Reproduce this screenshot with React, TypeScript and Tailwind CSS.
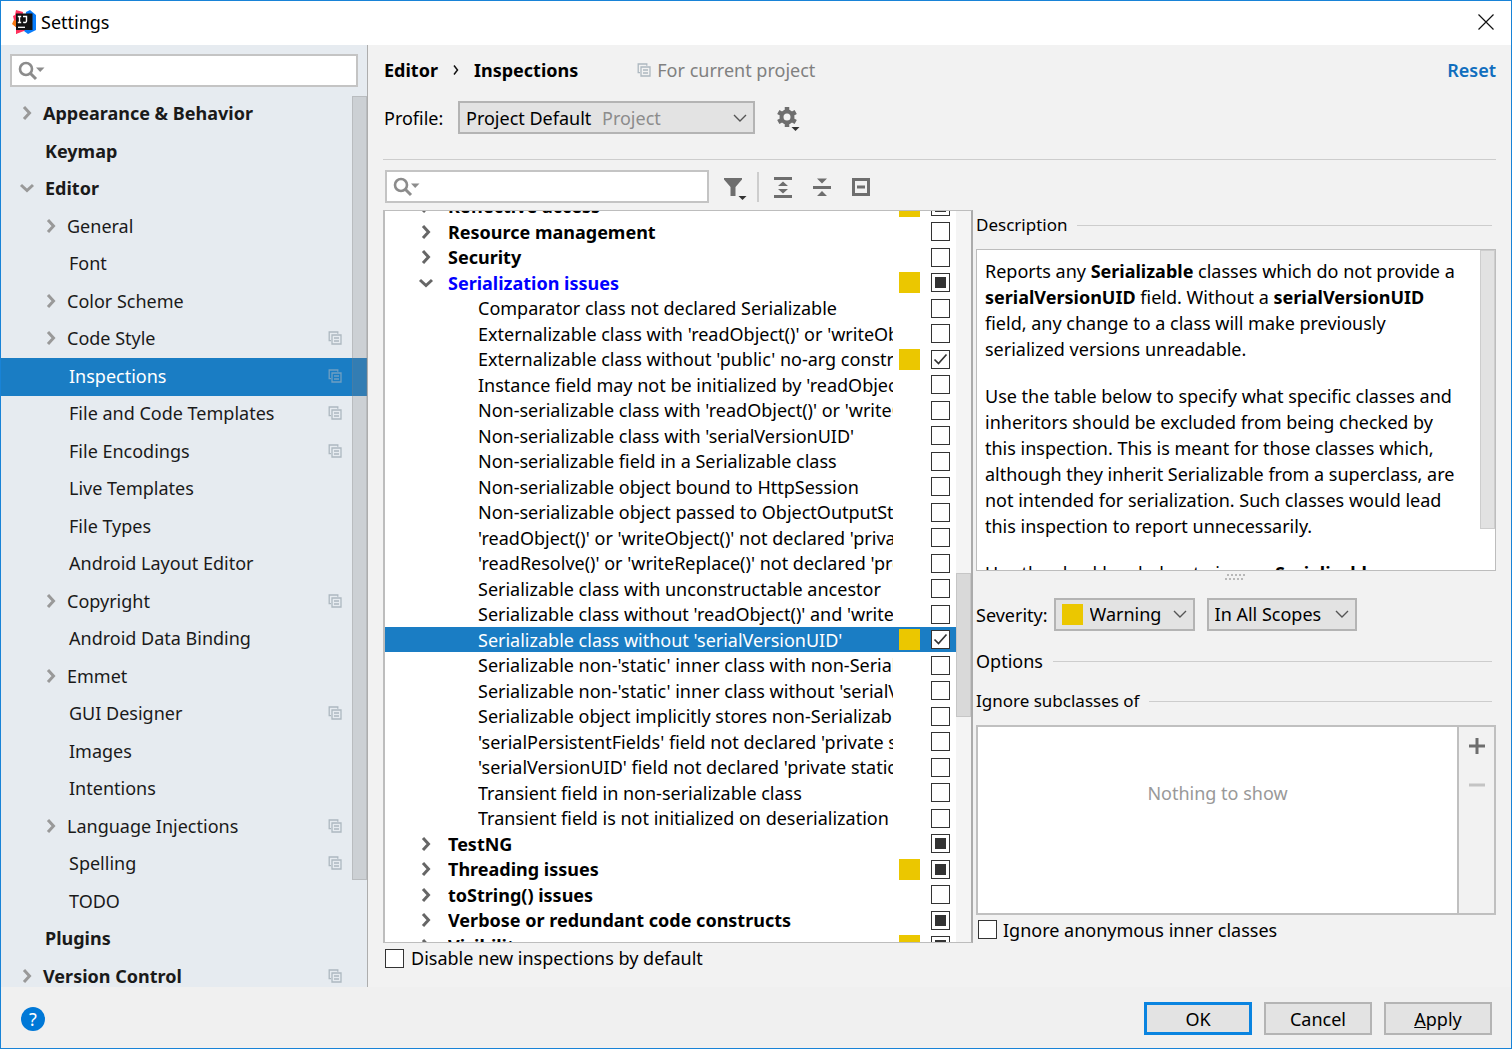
import type { ReactNode } from "react";

type TreeItem = { label: string; level: 0 | 1; arrow?: "open" | "closed"; shared?: boolean; selected?: boolean };

const tree: TreeItem[] = [
  { label: "Appearance & Behavior", level: 0, arrow: "closed" },
  { label: "Keymap", level: 0 },
  { label: "Editor", level: 0, arrow: "open" },
  { label: "General", level: 1, arrow: "closed" },
  { label: "Font", level: 1 },
  { label: "Color Scheme", level: 1, arrow: "closed" },
  { label: "Code Style", level: 1, arrow: "closed", shared: true },
  { label: "Inspections", level: 1, shared: true, selected: true },
  { label: "File and Code Templates", level: 1, shared: true },
  { label: "File Encodings", level: 1, shared: true },
  { label: "Live Templates", level: 1 },
  { label: "File Types", level: 1 },
  { label: "Android Layout Editor", level: 1 },
  { label: "Copyright", level: 1, arrow: "closed", shared: true },
  { label: "Android Data Binding", level: 1 },
  { label: "Emmet", level: 1, arrow: "closed" },
  { label: "GUI Designer", level: 1, shared: true },
  { label: "Images", level: 1 },
  { label: "Intentions", level: 1 },
  { label: "Language Injections", level: 1, arrow: "closed", shared: true },
  { label: "Spelling", level: 1, shared: true },
  { label: "TODO", level: 1 },
  { label: "Plugins", level: 0 },
  { label: "Version Control", level: 0, arrow: "closed", shared: true },
];

type State = "off" | "on" | "mixed";
type Inspection = { label: string; state: State; group?: "open" | "closed"; warn?: boolean; selected?: boolean };

const inspections: Inspection[] = [
  { label: "Reflective access", state: "mixed", group: "closed", warn: true },
  { label: "Resource management", state: "off", group: "closed" },
  { label: "Security", state: "off", group: "closed" },
  { label: "Serialization issues", state: "mixed", group: "open", warn: true },
  { label: "Comparator class not declared Serializable", state: "off" },
  { label: "Externalizable class with 'readObject()' or 'writeObject()'", state: "off" },
  { label: "Externalizable class without 'public' no-arg constructor", state: "on", warn: true },
  { label: "Instance field may not be initialized by 'readObject()'", state: "off" },
  { label: "Non-serializable class with 'readObject()' or 'writeObject()'", state: "off" },
  { label: "Non-serializable class with 'serialVersionUID'", state: "off" },
  { label: "Non-serializable field in a Serializable class", state: "off" },
  { label: "Non-serializable object bound to HttpSession", state: "off" },
  { label: "Non-serializable object passed to ObjectOutputStream", state: "off" },
  { label: "'readObject()' or 'writeObject()' not declared 'private'", state: "off" },
  { label: "'readResolve()' or 'writeReplace()' not declared 'protected'", state: "off" },
  { label: "Serializable class with unconstructable ancestor", state: "off" },
  { label: "Serializable class without 'readObject()' and 'writeObject()'", state: "off" },
  { label: "Serializable class without 'serialVersionUID'", state: "on", warn: true, selected: true },
  { label: "Serializable non-'static' inner class with non-Serializable outer class", state: "off" },
  { label: "Serializable non-'static' inner class without 'serialVersionUID'", state: "off" },
  { label: "Serializable object implicitly stores non-Serializable object", state: "off" },
  { label: "'serialPersistentFields' field not declared 'private static final'", state: "off" },
  { label: "'serialVersionUID' field not declared 'private static final long'", state: "off" },
  { label: "Transient field in non-serializable class", state: "off" },
  { label: "Transient field is not initialized on deserialization", state: "off" },
  { label: "TestNG", state: "mixed", group: "closed" },
  { label: "Threading issues", state: "mixed", group: "closed", warn: true },
  { label: "toString() issues", state: "off", group: "closed" },
  { label: "Verbose or redundant code constructs", state: "mixed", group: "closed" },
  { label: "Visibility", state: "mixed", group: "closed", warn: true },
];

function Arrow({ open, className }: { open: boolean; className: string }) {
  return (
    <svg viewBox="0 0 16 16" className={`w-4 h-4 shrink-0 ${className}`} fill="none" stroke="currentColor" strokeWidth="3">
      <path d={open ? "M2 5l6 5.5L14 5" : "M5 2l5.5 6L5 14"} />
    </svg>
  );
}

function SharedIcon({ className }: { className: string }) {
  return (
    <svg viewBox="0 0 14 14" className={`w-3.5 h-3.5 shrink-0 ${className}`} fill="none" stroke="currentColor" strokeWidth="1.3">
      <path d="M3 9.7H1.2V1h8.6v1.8M4 4h9v9H4zM6 7h5M6 10h5" />
    </svg>
  );
}

function SearchIcon() {
  return (
    <svg viewBox="0 0 28 20" className="w-7 h-5 shrink-0 text-[#8c8c8c]">
      <circle cx="8" cy="8" r="6" fill="none" stroke="currentColor" strokeWidth="2.6" />
      <path d="M12 12l6 6" stroke="currentColor" strokeWidth="3" />
      <path d="M18 6.500h8.500L22.200 11z" fill="currentColor" />
    </svg>
  );
}

function Chevron() {
  return (
    <svg viewBox="0 0 14 14" className="w-3.5 h-3.5 shrink-0 text-[#555]" fill="none" stroke="currentColor" strokeWidth="1.4">
      <path d="M1 4l6 6 6-6" />
    </svg>
  );
}

function Checkbox({ state, id }: { state: State; id: string }) {
  return (
    <span className="grid w-[19px] h-[19px] shrink-0">
      <input
        id={id}
        type="checkbox"
        defaultChecked={state === "on"}
        className="appearance-none col-start-1 row-start-1 w-[19px] h-[19px] bg-white border border-[#333]"
      />
      {state !== "off" && (
        <svg viewBox="0 0 19 19" className="col-start-1 row-start-1 w-[19px] h-[19px] pointer-events-none">
          {state === "on" ? (
            <path d="M3.500 9.500l4 4 8-9" fill="none" stroke="#333" strokeWidth="1.7" />
          ) : (
            <path d="M4 4h11v11H4z" fill="#333" />
          )}
        </svg>
      )}
    </span>
  );
}

function SectionTitle({ children }: { children: ReactNode }) {
  return (
    <div className="flex items-center gap-2.5 pr-1">
      <h3>{children}</h3>
      <div className="flex-1 h-px bg-[#cdcdcd]" />
    </div>
  );
}

function Sidebar() {
  return (
    <aside className="w-[367px] shrink-0 flex flex-col bg-[#e6ebf0] border-r border-[#adadad]">
      <label className="mx-[9px] mt-[9px] h-[33px] shrink-0 flex items-center px-1.5 bg-white border-2 border-[#c4c4c4]">
        <SearchIcon />
        <input type="text" aria-label="Search settings" className="flex-1 min-w-0 outline-none" />
      </label>
      <div className="relative flex-1 min-h-0 overflow-hidden pt-[9px]">
        <ul>
          {tree.map((item) => (
            <li
              key={item.label}
              className={`flex items-center pb-[3px] pr-[25px] h-[37px] even:h-[38px] ${item.level ? "pl-[42px]" : "pl-[18px]"} ${
                item.selected ? "bg-[#1a7dc4] text-white" : "text-[#1a1a1a]"
              } ${item.level ? "" : "font-bold"}`}
            >
              {item.arrow ? <Arrow open={item.arrow === "open"} className="text-[#999]" /> : <span className="w-4" />}
              <span className={`flex-1 ${item.arrow === "closed" ? "pl-2" : "pl-2.5"}`}>{item.label}</span>
              {item.shared && <SharedIcon className={item.selected ? "text-[#6f9fc2]" : "text-[#adb8c0]"} />}
            </li>
          ))}
        </ul>
        <div className="absolute right-0 top-[9px] w-[15px] h-[784px] bg-[#808080]/25 border border-[#808080]/25" />
      </div>
    </aside>
  );
}

function InspectionList() {
  return (
    <div className="flex-1 min-h-0 flex bg-white border-x-2 border-y border-[#bdbdbd] border-r-[#ababab] overflow-hidden">
      <ul className="flex-1 min-w-0 -mt-[18px]">
        {inspections.map((item, i) => (
          <li
            key={item.label}
            className={`flex items-center pr-[6px] h-[26px] even:h-[25px] ${item.group ? "pl-[33px]" : "pl-[93px]"} ${
              item.selected ? "bg-[#1a7dc4] text-white" : ""
            }`}
          >
            {item.group && <Arrow open={item.group === "open"} className="text-[#666] mr-3.5" />}
            <label
              htmlFor={`inspection-${i}`}
              className={`flex-1 min-w-0 overflow-hidden whitespace-nowrap ${item.group ? "font-bold" : ""} ${
                item.group === "open" ? "text-[#0000ff]" : ""
              }`}
            >
              {item.label}
            </label>
            <span className={`w-[21px] h-[21px] ml-1.5 mr-[11px] shrink-0 ${item.warn ? "bg-[#ebc700]" : ""}`} />
            <Checkbox id={`inspection-${i}`} state={item.state} />
          </li>
        ))}
      </ul>
      <div className="w-[15px] shrink-0 bg-[#f4f4f4]">
        <div className="mt-[362px] h-[144px] bg-[#d9d9d9] border border-[#c6c6c6]" />
      </div>
    </div>
  );
}

function Toolbar() {
  return (
    <div className="flex items-center mt-[10px] ml-0.5">
      <label className="w-[324px] h-[33px] flex items-center px-1.5 bg-white border-2 border-[#c4c4c4]">
        <SearchIcon />
        <input type="text" aria-label="Search inspections" className="flex-1 min-w-0 outline-none" />
      </label>
      <button aria-label="Filter" className="ml-[14px]">
        <svg viewBox="0 0 26 26" className="w-[26px] h-[26px]" fill="#6e6e6e">
          <path d="M1 4h18v1.500l-6.500 7.500v9h-5v-9L1 5.500z" />
          <path d="M15.500 22h8l-4 4z" fill="#333" />
        </svg>
      </button>
      <div className="w-0.5 h-[30px] bg-[#cdcdcd] ml-2" />
      <button aria-label="Expand all" className="ml-3">
        <svg viewBox="0 0 24 24" className="w-6 h-6" fill="#6e6e6e">
          <path d="M3 2h18v3H3zM3 20h18v3H3zM12 6.500l5 4.500H7zM12 18.500l5-4.500H7z" />
        </svg>
      </button>
      <button aria-label="Collapse all" className="ml-[15px]">
        <svg viewBox="0 0 24 24" className="w-6 h-6" fill="#6e6e6e">
          <path d="M3 11h18v3H3zM12 8.500L17 3.500H7zM12 16l5 5H7z" />
        </svg>
      </button>
      <button aria-label="Reset to empty" className="ml-[15px]">
        <svg viewBox="0 0 24 24" className="w-6 h-6" fill="none" stroke="#6e6e6e" strokeWidth="3">
          <path d="M4.500 4.500h15v15h-15zM8 12h8" />
        </svg>
      </button>
    </div>
  );
}

function DetailsPane() {
  return (
    <section className="flex-1 min-w-0 flex flex-col pl-[3px]">
      <div className="h-[39px] shrink-0 pt-0.5 text-[17px] leading-[26px]">
        <SectionTitle>Description</SectionTitle>
      </div>
      <div className="flex-1 min-h-0 flex bg-white border border-[#bdbdbd] overflow-hidden">
        <div className="flex-1 pl-2 pr-5 pt-2">
          <p>
            Reports any <b>Serializable</b> classes which do not provide a <b>serialVersionUID</b> field. Without a{" "}
            <b>serialVersionUID</b> field, any change to a class will make previously serialized versions unreadable.
          </p>
          <p className="mt-[21px]">
            Use the table below to specify what specific classes and inheritors should be excluded from being checked by
            this inspection. This is meant for those classes which, although they inherit Serializable from a
            superclass, are not intended for serialization. Such classes would lead this inspection to report
            unnecessarily.
          </p>
          <p className="mt-[21px]">
            Use the checkbox below to ignore <b>Serializable</b>
          </p>
        </div>
        <div className="w-[15px] shrink-0">
          <div className="h-[279px] bg-[#e2e2e2] border border-[#cdcdcd]" />
        </div>
      </div>
      <div className="h-[26px] shrink-0 flex justify-center pt-[3px]">
        <svg viewBox="0 0 24 6" className="w-6 h-1.5" stroke="#b8b8b8" strokeWidth="2" strokeDasharray="2 2">
          <path d="M3 1h20M1 5h20" />
        </svg>
      </div>
      <div className="flex items-center h-[34px] shrink-0">
        <label htmlFor="severity" className="pt-0.5">Severity:</label>
        <div className="ml-[6px] w-[141px] h-[33px] flex items-center pl-1.5 pr-[6px] bg-[#e3e3e3] border-2 border-[#b4b4b4]">
          <span className="w-[21px] h-[21px] shrink-0 bg-[#ebc700]" />
          <select id="severity" className="appearance-none flex-1 min-w-0 pl-[7px] outline-none">
            <option>Warning</option>
          </select>
          <Chevron />
        </div>
        <div className="ml-3 w-[150px] h-[33px] flex items-center pl-1.5 pr-[6px] bg-[#e3e3e3] border-2 border-[#b4b4b4]">
          <select aria-label="Scope" className="appearance-none flex-1 min-w-0 outline-none">
            <option>In All Scopes</option>
          </select>
          <Chevron />
        </div>
      </div>
      <div className="mt-[17px] shrink-0">
        <SectionTitle>Options</SectionTitle>
      </div>
      <div className="mt-[14px] shrink-0 text-[17px] leading-[26px]">
        <SectionTitle>Ignore subclasses of</SectionTitle>
      </div>
      <div className="mt-[11px] h-[190px] shrink-0 flex border-2 border-[#c0c0c0]">
        <div className="flex-1 bg-white flex justify-center pt-[53px] text-[#999]">Nothing to show</div>
        <div className="w-[37px] border-l-2 border-[#c0c0c0] flex flex-col items-center pt-[11px] gap-[23px]">
          <button aria-label="Add">
            <svg viewBox="0 0 16 16" className="w-4 h-4" stroke="#6e6e6e" strokeWidth="3">
              <path d="M8 0v16M0 8h16" />
            </svg>
          </button>
          <button aria-label="Remove" disabled>
            <svg viewBox="0 0 16 16" className="w-4 h-4" stroke="#c4c4c4" strokeWidth="3">
              <path d="M0 8h16" />
            </svg>
          </button>
        </div>
      </div>
      <div className="mt-px flex items-center gap-1.5 pl-0.5 h-[27px] shrink-0">
        <Checkbox id="ignore-anonymous" state="off" />
        <label htmlFor="ignore-anonymous">Ignore anonymous inner classes</label>
      </div>
    </section>
  );
}

export default function App() {
  return (
    <div className="h-screen flex flex-col border border-[#1883d7] bg-[#f2f2f2] font-['Noto_Sans',sans-serif] text-[18px] leading-[26px] text-black overflow-hidden">
      <header className="h-11 shrink-0 flex items-center bg-white pl-[11px] pr-[17px] pb-0.5">
        <svg viewBox="0 0 24 24" className="w-6 h-6 mr-[5px]">
          <path d="M4 0l7 2-2 18-5 4 0-7-3-3 1-4-1-4 2-1z" fill="#fe315d" />
          <path d="M0 14l2-4 3 1v7z" fill="#f97a12" />
          <path d="M14 2l4-2 6 5v15l-8 4-4-3z" fill="#087cfa" />
          <path d="M4 18h11l-3 3-8 3z" fill="#fe315d" />
          <path d="M4 3.500h16.500V20H4z" fill="#111" />
          <path d="M5.800 6.500h3.400M7.500 6.500v6M5.800 12.500h3.400M11 6.500h3.500v4.500q0 2-3.300 1.300" fill="none" stroke="#fff" strokeWidth="1.400" />
          <path d="M6 17.300h7" stroke="#fff" strokeWidth="1.300" />
        </svg>
        <h1 className="flex-1">Settings</h1>
        <button aria-label="Close">
          <svg viewBox="0 0 16 16" className="w-4 h-4" stroke="#111" strokeWidth="1.200">
            <path d="M0.500 0.500l15 15M15.500 0.500l-15 15" />
          </svg>
        </button>
      </header>

      <div className="flex-1 min-h-0 flex">
        <Sidebar />
        <main className="flex-1 min-w-0 flex flex-col pl-[15px] pr-[15px]">
          <div className="flex items-center mt-3 pl-px">
            <h2 className="font-bold">Editor</h2>
            <svg viewBox="0 0 6 10" className="w-1.5 h-2.5 mx-[15px]" fill="none" stroke="#111" strokeWidth="1.500">
              <path d="M1 0.500L4.500 5 1 9.500" />
            </svg>
            <h2 className="font-bold">Inspections</h2>
            <SharedIcon className="ml-[59px] mr-[6px] text-[#adb8c0]" />
            <span className="flex-1 text-[#808080]">For current project</span>
            <a href="#reset" className="font-semibold text-[#106ebe]">Reset</a>
          </div>

          <div className="flex items-center mt-[18px] pl-px">
            <label htmlFor="profile" className="w-[74px]">Profile:</label>
            <div className="w-[297px] h-[33px] flex items-center pl-1.5 pr-[6px] bg-[#e3e3e3] border-2 border-[#b4b4b4]">
              <select id="profile" className="appearance-none outline-none">
                <option>Project Default</option>
              </select>
              <span className="flex-1 pl-2.5 text-[#8c8c8c]">Project</span>
              <Chevron />
            </div>
            <button aria-label="Profile actions" className="ml-[21px]">
              <svg viewBox="0 0 26 26" className="w-[26px] h-[26px]">
                <g fill="none" stroke="#6e6e6e">
                  <circle cx="11" cy="12" r="5.500" strokeWidth="4" />
                  <path d="M11 2v4M11 18v4M2.300 7l3.500 2M16.200 15l3.500 2M2.300 17l3.500-2M16.200 9l3.500-2" strokeWidth="4.500" />
                </g>
                <path d="M15.500 22h8l-4 4z" fill="#333" />
              </svg>
            </button>
          </div>

          <div className="mt-[25px] h-px bg-[#cdcdcd] shrink-0" />
          <Toolbar />

          <div className="flex-1 min-h-0 flex mt-[7px]">
            <section className="flex-[590_1_0] min-w-0 flex flex-col">
              <InspectionList />
              <div className="h-11 shrink-0 flex items-start gap-[7px] pl-0.5 pt-0.5">
                <span className="pt-1"><Checkbox id="disable-new" state="off" /></span>
                <label htmlFor="disable-new">Disable new inspections by default</label>
              </div>
            </section>
            <div className="flex-[523_1_0] min-w-0 flex pb-11">
              <DetailsPane />
            </div>
          </div>
        </main>
      </div>

      <footer className="h-[61px] shrink-0 flex items-center bg-[#f0f0f0] pl-5 pr-[19px] pt-0.5">
        <button aria-label="Help" className="w-6 h-6 rounded-full bg-[#0078d7] text-white leading-6">?</button>
        <div className="ml-auto flex gap-3">
          <button className="w-[108px] h-[33px] bg-[#e3e3e3] border-[3px] border-[#0a84e0]">OK</button>
          <button className="w-[108px] h-[33px] bg-[#e3e3e3] border-2 border-[#b4b4b4]">Cancel</button>
          <button className="w-[108px] h-[33px] bg-[#e3e3e3] border-2 border-[#b4b4b4]"><u>A</u>pply</button>
        </div>
      </footer>
    </div>
  );
}
